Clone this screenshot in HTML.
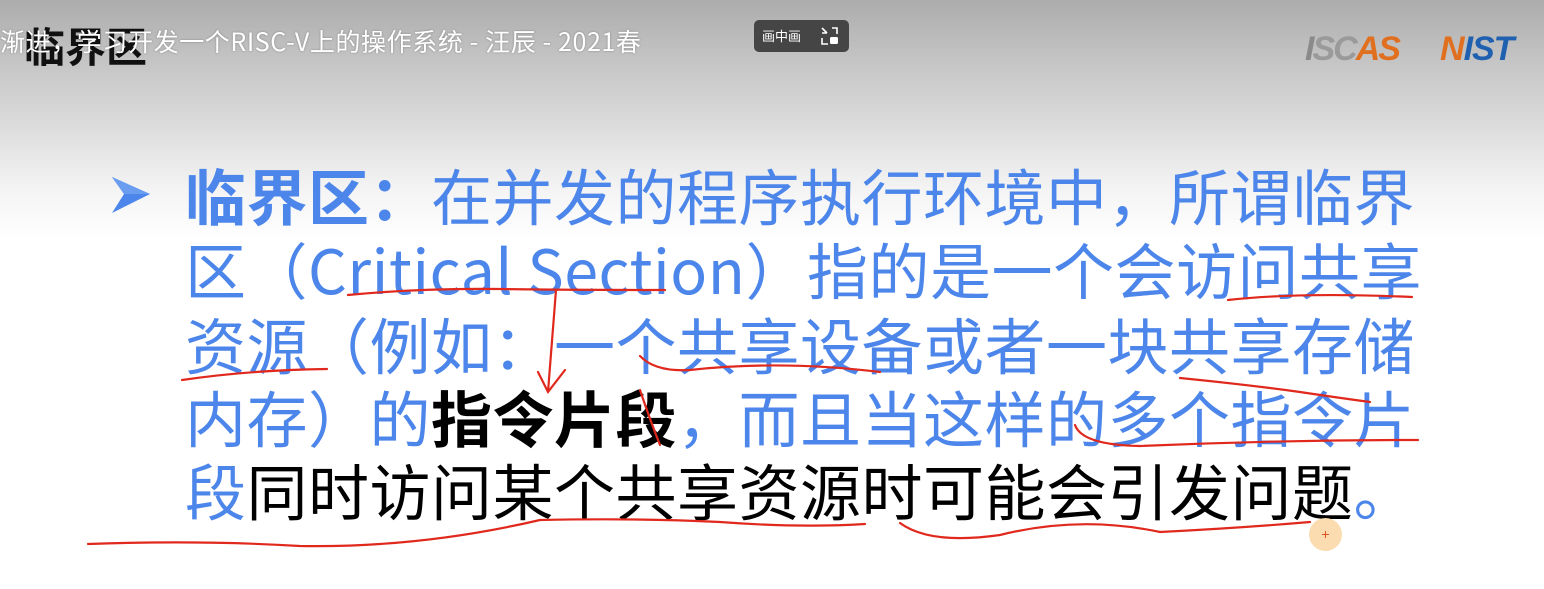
<!DOCTYPE html>
<html><head><meta charset="utf-8"><style>
body{margin:0;width:1544px;height:589px;overflow:hidden;position:relative;
background:linear-gradient(#acacac 0px,#c4c4c4 60px,#dadada 120px,#f4f4f4 190px,#fff 240px,#fff 589px);
font-family:"Liberation Sans","Noto Sans CJK SC",sans-serif;}
.l{position:absolute;left:185px;font-family:"Noto Sans CJK SC",sans-serif;font-size:61px;line-height:73px;color:#4d86ea;white-space:nowrap;letter-spacing:0.5px}
.k{color:#000}
b{font-weight:bold}
</style></head><body>
<div style="position:absolute;left:24px;top:18px;font-family:'Noto Sans CJK SC',sans-serif;font-weight:bold;font-size:41px;color:#111;line-height:52px">临界区</div>
<div style="position:absolute;left:0;top:25px;font-family:'Noto Sans CJK SC',sans-serif;font-size:25px;color:#fff;line-height:32px;letter-spacing:0.6px;text-shadow:0 0 2px rgba(0,0,0,.3)">渐进，学习开发一个RISC-V上的操作系统 - 汪辰 - 2021春</div>
<div style="position:absolute;left:754px;top:20px;width:95px;height:32px;background:#454545;border-radius:5px;color:#fff;font-family:'Noto Sans CJK SC',sans-serif;font-size:13px;line-height:32px">
<span style="position:absolute;left:8px">画中画</span>
<svg style="position:absolute;left:66px;top:6px" width="20" height="20" viewBox="0 0 20 20"><path d="M2 2l5 5M2 7V7h5M12 2h5v6M2 12v6h6" stroke="#fff" stroke-width="1.6" fill="none"/><rect x="10" y="11" width="8" height="7" rx="1.5" fill="#fff"/></svg></div>
<div style="position:absolute;left:1305px;top:30px;font:italic bold 34px 'Liberation Sans',sans-serif;color:#8a8a8a;letter-spacing:-2px">I<span style="color:#9a9a9a">SC</span><span style="color:#e07020">AS</span></div>
<div style="position:absolute;left:1440px;top:30px;font:italic bold 34px 'Liberation Sans',sans-serif;color:#2060b0;letter-spacing:-1px"><span style="color:#e07020">N</span>IST</div>
<svg style="position:absolute;left:110px;top:175px" width="42" height="40" viewBox="0 0 42 40"><path d="M2 2L40 19L2 38L14 19Z" fill="#4d86ea"/><path d="M2 2L40 19L14 19Z" fill="#6a9cf0"/></svg>
<div class="l" style="top:157px"><b>临界区：</b>在并发的程序执行环境中，所谓临界</div>
<div class="l" style="top:231px">区（Critical Section）指的是一个会访问共享</div>
<div class="l" style="top:306px">资源（例如：一个共享设备或者一块共享存储</div>
<div class="l" style="top:379px">内存）的<b class="k">指令片段</b>，而且当这样的多个指令片</div>
<div class="l" style="top:452px">段<span class="k">同时访问某个共享资源时可能会引发问题</span>。</div>
<svg style="position:absolute;left:0;top:0" width="1544" height="589" viewBox="0 0 1544 589" fill="none" stroke="#e0281c" stroke-width="2.2" stroke-linecap="round">
<path d="M348 295 Q420 288 500 289 T665 290"/>
<path d="M556 290 Q552 340 548 392 M538 372 L548 392 L565 370"/>
<path d="M182 380 Q250 370 327 369"/>
<path d="M640 356 Q655 372 690 370 Q780 360 880 372"/>
<path d="M1228 300 Q1300 292 1412 297"/>
<path d="M1180 378 Q1250 385 1300 392 Q1340 398 1370 402"/>
<path d="M1075 425 Q1082 445 1140 446 Q1280 440 1418 440"/>
<path d="M640 390 Q650 420 660 445"/>
<path d="M88 544 Q200 540 300 546 Q420 548 540 520 Q640 518 720 522 Q800 528 865 524"/>
<path d="M900 523 Q930 545 1000 535 Q1080 515 1160 532 Q1240 528 1310 522"/>
</svg>
<div style="position:absolute;left:1309px;top:518px;width:33px;height:33px;border-radius:50%;background:#fbdcb0;color:#e05020;font:14px 'Liberation Sans',sans-serif;line-height:33px;text-align:center">+</div>
</body></html>
